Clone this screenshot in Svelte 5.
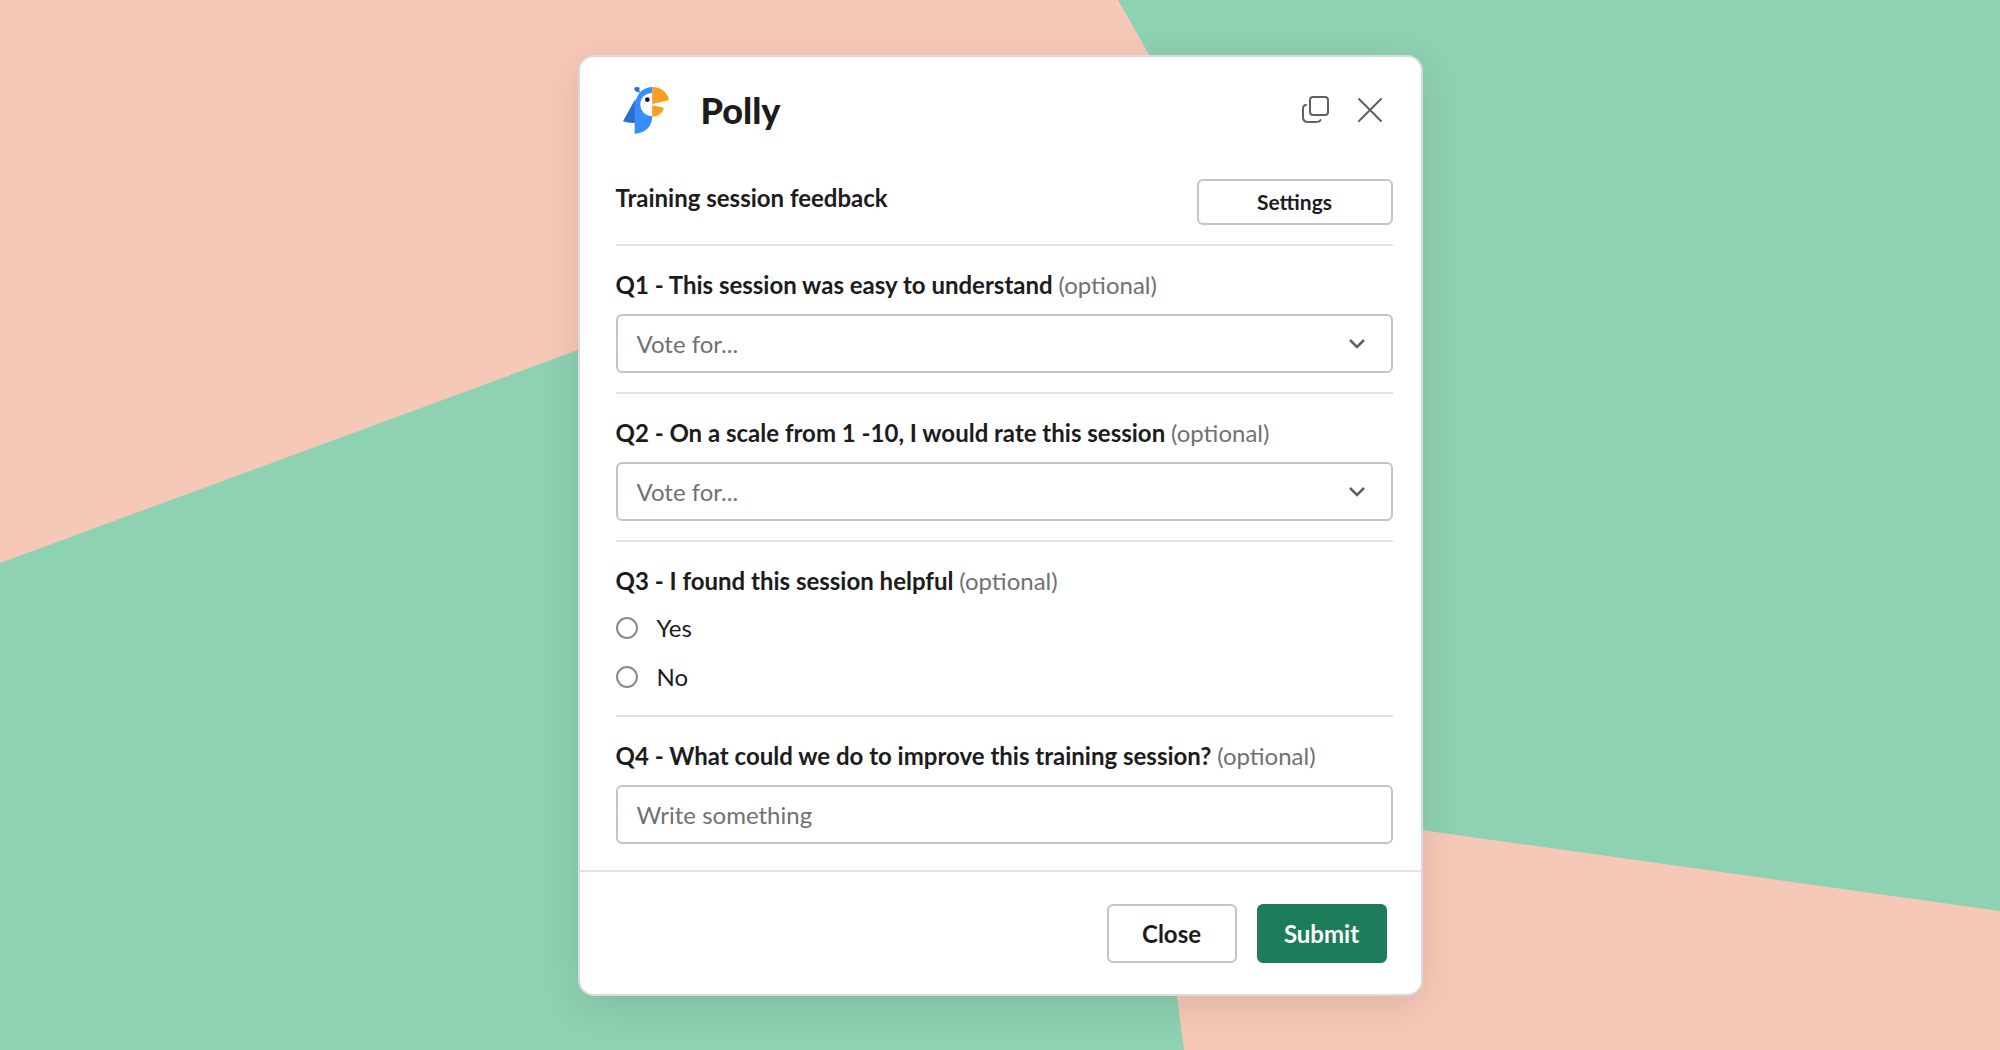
<script lang="ts">
  type Question = {
    id: string;
    title: string;
    kind: 'select' | 'radio' | 'text';
    placeholder?: string;
    options?: string[];
  };

  const questions: Question[] = [
    {
      id: 'q1',
      title: 'Q1 - This session was easy to understand',
      kind: 'select',
      placeholder: 'Vote for...',
    },
    {
      id: 'q2',
      title: 'Q2 - On a scale from 1 -10, I would rate this session',
      kind: 'select',
      placeholder: 'Vote for...',
    },
    {
      id: 'q3',
      title: 'Q3 - I found this session helpful',
      kind: 'radio',
      options: ['Yes', 'No'],
    },
    {
      id: 'q4',
      title: 'Q4 - What could we do to improve this training session?',
      kind: 'text',
      placeholder: 'Write something',
    },
  ];

  let answers: Record<string, string> = $state({ q1: '', q2: '', q3: '', q4: '' });
</script>

<div class="page">
  <svg class="backdrop" viewBox="0 0 2000 1050" preserveAspectRatio="none" aria-hidden="true">
    <path d="M0 0H1118L1189 125L0 563Z" />
    <path d="M1150 792L2000 911V1050H1184Z" />
  </svg>

  <form class="modal" onsubmit={(e) => e.preventDefault()}>
    <header class="header">
      <svg class="logo" viewBox="160 127 138 141" aria-hidden="true">
        <path fill="#2b6fd0" d="M204 150L160 230Q176 236 196 235V165Z" />
        <path fill="#2b6fd0" d="M194 129Q202 125 210 129L209 136L211 144L203 141Q194 142 194 134Z" />
        <path fill="#378ef8" d="M248 127C224 128 209 141 203 156L195 171V267C226 267 248 245 248 215Z" />
        <path fill="#fff" d="M248 145C226 145 212 160 212 179C212 200 228 215 248 215Z" />
        <path fill="#fb9d1e" d="M248 127C274 127 293 143 298 166L248 178Z" />
        <path fill="#fb9d1e" d="M248 182L282 189C280 204 267 215 248 216Z" />
        <circle fill="#1d1446" cx="233" cy="165" r="7" />
      </svg>
      <h1>Polly</h1>
      <button type="button" class="icon-button" aria-label="Open in new window">
        <svg width="28" height="28" viewBox="0 0 28 28">
          <rect x="8" y="1" width="18" height="18" rx="3" />
          <path d="M4 9Q1 9 1 13V21Q1 26 6 26H13Q18 26 18.500 24" />
        </svg>
      </button>
      <button type="button" class="icon-button" aria-label="Close dialog">
        <svg width="24" height="24" viewBox="0 0 24 24">
          <path d="M1 1L23 23M23 1L1 23" />
        </svg>
      </button>
    </header>

    <div class="body">
      <div class="intro">
        <h2>Training session feedback</h2>
        <button type="button" class="button small">Settings</button>
      </div>

      {#each questions as question (question.id)}
        {#if question.kind === 'radio'}
          <div class="question choices" role="radiogroup" aria-labelledby="{question.id}-title">
            <div class="title" id="{question.id}-title">{question.title} <span>(optional)</span></div>
            {#each question.options ?? [] as option}
              <label class="choice">
                <input type="radio" name={question.id} value={option} bind:group={answers[question.id]} />
                {option}
              </label>
            {/each}
          </div>
        {:else}
          <div class="question">
            <label class="title" for={question.id}>{question.title} <span>(optional)</span></label>
            {#if question.kind === 'select'}
              <div class="select">
                <select id={question.id} class="field" bind:value={answers[question.id]}>
                  <option value="">{question.placeholder}</option>
                </select>
                <svg width="16" height="11" viewBox="0 0 16 11" aria-hidden="true">
                  <path d="M1 2L8 9L15 2" />
                </svg>
              </div>
            {:else}
              <input
                id={question.id}
                class="field"
                type="text"
                placeholder={question.placeholder}
                bind:value={answers[question.id]}
              />
            {/if}
          </div>
        {/if}
      {/each}
    </div>

    <footer class="footer">
      <button type="button" class="button">Close</button>
      <button type="submit" class="button primary">Submit</button>
    </footer>
  </form>
</div>

<style>
  :global(body) {
    background: #8ed1b3;
  }

  .page {
    position: relative;
    box-sizing: border-box;
    min-height: 100vh;
    padding: 55px 24px 54px;
    font-family: Lato, sans-serif;
    font-size: 24px;
    line-height: 32px;
    color: #1d1c1d;
  }

  .page * {
    box-sizing: border-box;
  }

  .backdrop {
    position: absolute;
    inset: 0;
    width: 100%;
    height: 100%;
    fill: #f6c8b8;
  }

  .modal {
    position: relative;
    max-width: 845px;
    margin: 0 auto;
    border: 2px solid #dadada;
    border-radius: 16px;
    background: #fff;
    box-shadow: 0 10px 40px rgba(0, 0, 0, 0.1);
  }

  .header {
    display: flex;
    align-items: center;
    height: 106px;
    padding: 0 39px 0 43px;
  }

  .logo {
    width: 46px;
    height: 47px;
  }

  h1 {
    flex: 1;
    margin: 0 0 0 32px;
    font-size: 36px;
    line-height: 44px;
    font-weight: 900;
  }

  .icon-button {
    display: flex;
    padding: 0;
    border: 0;
    background: none;
    cursor: pointer;
  }

  .icon-button + .icon-button {
    margin-left: 28px;
  }

  .icon-button svg {
    fill: none;
    stroke: #616061;
    stroke-width: 2;
    stroke-linecap: round;
  }

  .body {
    padding: 16px 28px 26px 36px;
  }

  .intro {
    display: flex;
    align-items: flex-start;
    justify-content: space-between;
    padding-bottom: 19px;
  }

  h2 {
    margin: 3px 0 0;
    font-size: 24px;
    line-height: 32px;
    font-weight: 700;
  }

  .question {
    padding: 23px 0 19px;
    border-top: 2px solid #e3e3e3;
  }

  .question:last-child {
    padding-bottom: 0;
  }

  .title {
    display: block;
    margin-bottom: 13px;
    font-weight: 700;
  }

  .title span {
    font-weight: 400;
    color: #717171;
  }

  .field {
    display: block;
    width: 100%;
    height: 59px;
    padding: 0 19px;
    border: 2px solid #c4c4c4;
    border-radius: 6px;
    background: #fff;
    font: inherit;
    color: #717171;
    appearance: none;
  }

  .field::placeholder {
    color: #717171;
    opacity: 1;
  }

  .select {
    position: relative;
  }

  .select svg {
    position: absolute;
    top: 24px;
    right: 28px;
    fill: none;
    stroke: #616061;
    stroke-width: 2.5;
    pointer-events: none;
  }

  .choices {
    padding-bottom: 14px;
  }

  .choices .title {
    margin-bottom: 6px;
  }

  .choice {
    display: flex;
    align-items: center;
    gap: 19px;
    height: 49px;
  }

  .choice input {
    width: 22px;
    height: 22px;
    margin: 0;
    border: 2px solid #8a8a8a;
    border-radius: 50%;
    background: #fff;
    appearance: none;
  }

  .choice input:checked {
    border: 7px solid #1d7c5a;
  }

  .button {
    width: 130px;
    height: 59px;
    padding: 0;
    border: 2px solid #c4c4c4;
    border-radius: 6px;
    background: #fff;
    font: inherit;
    font-weight: 700;
    color: #1d1c1d;
    cursor: pointer;
  }

  .small {
    width: 196px;
    height: 46px;
    font-size: 21px;
  }

  .primary {
    border-color: #1d7c5a;
    background: #1d7c5a;
    color: #fff;
  }

  .footer {
    display: flex;
    justify-content: flex-end;
    gap: 20px;
    padding: 32px 34px 31px;
    border-top: 2px solid #e3e3e3;
  }
</style>
